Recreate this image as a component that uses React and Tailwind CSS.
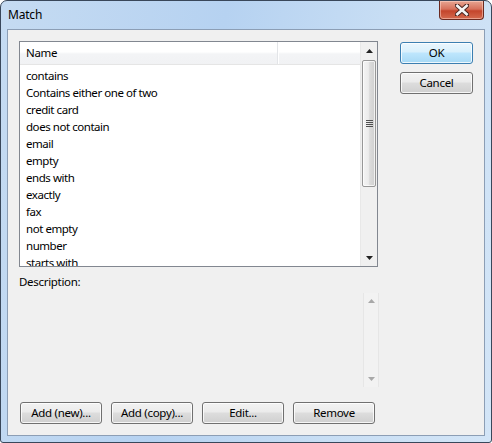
import React from "react";

const items = [
  "contains",
  "Contains either one of two",
  "credit card",
  "does not contain",
  "email",
  "empty",
  "ends with",
  "exactly",
  "fax",
  "not empty",
  "number",
  "starts with",
];

const font = { fontFamily: '"Noto Sans", "Open Sans", sans-serif' };

const Btn = ({ children, primary, className = "" }) => (
  <div
    className={`h-[22px] rounded-[3px] border flex items-center justify-center text-[11.5px] tracking-[-0.3px] text-black shadow-[inset_0_0_0_1px_rgba(255,255,255,0.8)] ${
      primary
        ? "border-[#3c7fb1] bg-[linear-gradient(#eaf6fd_0%,#d9f0fc_45%,#bee6fd_50%,#a7d9f5_100%)]"
        : "border-[#707070] bg-[linear-gradient(#f2f2f2_0%,#ebebeb_45%,#dddddd_50%,#cfcfcf_100%)]"
    } ${className}`}
  >
    {children}
  </div>
);

const Arrow = ({ up, light }) => (
  <svg width="7" height="4" viewBox="0 0 7 4">
    <path d={up ? "M0 4 L3.5 0 L7 4 Z" : "M0 0 L3.5 4 L7 0 Z"} fill={light ? "#a8a8a8" : "#222"} />
  </svg>
);

export default function App() {
  return (
    <div className="w-[492px] h-[443px] bg-white" style={font}>
      <div className="w-[492px] h-[443px] flex flex-col border border-[#39475a] rounded-t-[7px] rounded-b-[3px] bg-[linear-gradient(100deg,#c5dbf2_0%,#b6d2f1_40%,#c8def4_70%,#d3e5f7_100%)] overflow-hidden">
        {/* title bar */}
        <div className="h-[28px] flex items-start justify-between shrink-0">
          <span className="pl-[7px] pt-[6px] text-[12px] tracking-[-0.2px] text-black leading-[16px]">Match</span>
          <div className="mr-[7px] w-[45px] h-[19px] rounded-b-[4px] border border-t-0 border-[#6b2a20] bg-[linear-gradient(#e7a592_0%,#d6715b_45%,#c4452c_55%,#d46a4e_100%)] flex items-center justify-center shadow-[inset_0_0_0_1px_rgba(255,220,210,0.5)]">
            <svg width="14" height="12" viewBox="0 0 14 12">
              <path d="M2 1.5 L12 10.5 M12 1.5 L2 10.5" stroke="#4a2520" strokeWidth="4.6" strokeLinecap="square" />
              <path d="M2.3 1.8 L11.7 10.2 M11.7 1.8 L2.3 10.2" stroke="#f4f4f4" strokeWidth="2.6" strokeLinecap="square" />
            </svg>
          </div>
        </div>

        {/* client area */}
        <div className="flex-1 px-[6px] pb-[6px] flex">
          <div className="flex-1 border border-[#8c9eb5] bg-[#f0f0f0] flex pl-[11px] pt-[11px]">
            {/* left column */}
            <div className="w-[360px] flex flex-col">
              {/* list view */}
              <div className="w-[359px] h-[226px] border border-[#828790] bg-white flex">
                <div className="flex-1 flex flex-col overflow-hidden">
                  <div className="h-[23px] flex shrink-0 border-b border-[#e5e5e5] bg-[linear-gradient(#ffffff_0%,#ffffff_45%,#f3f4f6_55%,#f1f2f4_100%)]">
                    <div className="w-[258px] border-r border-[#e3e5e8] pl-[6px] flex items-center text-[11.5px] tracking-[-0.3px] text-black">Name</div>
                    <div className="flex-1 border-l border-white" />
                  </div>
                  <div className="flex flex-col pt-[2px]">
                    {items.map((t) => (
                      <div key={t} className="h-[17px] pl-[6px] flex items-center text-[11.5px] tracking-[-0.45px] text-black whitespace-nowrap">
                        {t}
                      </div>
                    ))}
                  </div>
                </div>
                {/* scrollbar */}
                <div className="w-[17px] flex flex-col bg-[#f0f0f0] border-l border-[#e8e8e8]">
                  <div className="h-[17px] flex items-center justify-center shrink-0">
                    <Arrow up />
                  </div>
                  <div className="mx-[1px] mt-[1px] h-[127px] rounded-[2px] border border-[#979797] bg-[linear-gradient(90deg,#f4f4f4_0%,#ececec_45%,#dcdcdc_55%,#cfcfcf_100%)] shadow-[inset_0_0_0_1px_rgba(255,255,255,0.7)] flex items-center justify-center">
                    <div className="flex flex-col gap-[1px]">
                      {[0, 1, 2, 3].map((i) => (
                        <div key={i} className="w-[7px] h-[1px] bg-[#505050]" />
                      ))}
                    </div>
                  </div>
                  <div className="flex-1" />
                  <div className="h-[17px] flex items-center justify-center shrink-0">
                    <Arrow />
                  </div>
                </div>
              </div>

              {/* description */}
              <div className="mt-[7px] h-[15px] leading-[15px] text-[11.5px] tracking-[-0.3px] text-black">Description:</div>
              <div className="mt-[4px] h-[94px] flex justify-end">
                <div className="w-[16px] h-full flex flex-col justify-between bg-[#f2f2f2] border-x border-[#e6e6e6]">
                  <div className="h-[16px] flex items-center justify-center">
                    <Arrow up light />
                  </div>
                  <div className="h-[16px] flex items-center justify-center">
                    <Arrow light />
                  </div>
                </div>
              </div>

              {/* bottom buttons */}
              <div className="mt-[15px] ml-[1px] flex gap-[9px]">
                <Btn className="w-[82px]">Add (new)...</Btn>
                <Btn className="w-[82px]">Add (copy)...</Btn>
                <Btn className="w-[82px]">Edit...</Btn>
                <Btn className="w-[82px]">Remove</Btn>
              </div>
            </div>

            {/* right buttons */}
            <div className="ml-[21px] pt-[1px] flex flex-col gap-[8px]">
              <Btn primary className="w-[73px]">OK</Btn>
              <Btn className="w-[73px]">Cancel</Btn>
            </div>
          </div>
        </div>
      </div>
    </div>
  );
}
